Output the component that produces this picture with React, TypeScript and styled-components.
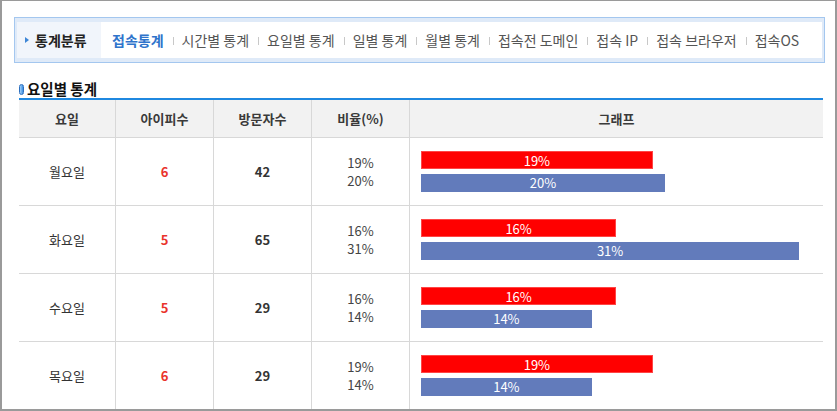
import React from 'react';
import styled, { createGlobalStyle } from 'styled-components';

type DayStat = {
  day: string;
  ips: number;
  visitors: number;
  ipRate: number;
  visitRate: number;
};

const stats: DayStat[] = [
  { day: '월요일', ips: 6, visitors: 42, ipRate: 19, visitRate: 20 },
  { day: '화요일', ips: 5, visitors: 65, ipRate: 16, visitRate: 31 },
  { day: '수요일', ips: 5, visitors: 29, ipRate: 16, visitRate: 14 },
  { day: '목요일', ips: 6, visitors: 29, ipRate: 19, visitRate: 14 },
];

const menu = ['접속통계', '시간별 통계', '요일별 통계', '일별 통계', '월별 통계', '접속전 도메인', '접속 IP', '접속 브라우저', '접속OS'];

const PX_PER_PERCENT = 12.2;

export default function App(): JSX.Element {
  return <>
    <GlobalStyle />
    <Frame>
      <NavBox>
        <NavLabel>
          <Arrow />
          통계분류
        </NavLabel>
        <NavList>
          { menu.map((item, i) => (
            <React.Fragment key={ item }>
              { i > 0 && <Separator /> }
              <NavItem $active={ i === 0 }>{ item }</NavItem>
            </React.Fragment>
          )) }
        </NavList>
      </NavBox>
      <Section>
        <TitleRow>
          <Pill />
          <Title>요일별 통계</Title>
        </TitleRow>
        <StatTable>
          <thead>
            <tr>
              <HeadCell style={{ width: 96 }}>요일</HeadCell>
              <HeadCell style={{ width: 97 }}>아이피수</HeadCell>
              <HeadCell style={{ width: 97 }}>방문자수</HeadCell>
              <HeadCell style={{ width: 97 }}>비율(%)</HeadCell>
              <HeadCell $last>그래프</HeadCell>
            </tr>
          </thead>
          <tbody>
            { stats.map(row => (
              <tr key={ row.day }>
                <Cell>{ row.day }</Cell>
                <Cell><IpCount>{ row.ips }</IpCount></Cell>
                <Cell><Visitors>{ row.visitors }</Visitors></Cell>
                <Cell>
                  <RateLine>{ `${row.ipRate}%` }</RateLine>
                  <RateLine>{ `${row.visitRate}%` }</RateLine>
                </Cell>
                <GraphCell>
                  <Bar $kind="ip" style={{ width: row.ipRate * PX_PER_PERCENT }}>{ `${row.ipRate}%` }</Bar>
                  <Bar $kind="visit" style={{ width: row.visitRate * PX_PER_PERCENT }}>{ `${row.visitRate}%` }</Bar>
                </GraphCell>
              </tr>
            )) }
          </tbody>
        </StatTable>
      </Section>
    </Frame>
  </>;
}

const GlobalStyle = createGlobalStyle`
  html, body {
    margin: 0;
    padding: 0;
    background: #fff;
  }
  body {
    font-family: "Noto Sans CJK KR", "Noto Sans", sans-serif;
    color: #333;
  }
`;

const Frame = styled.div`
  box-sizing: border-box;
  width: 837px;
  height: 411px;
  overflow: hidden;
  border: 2px solid #9a9a9a;
  border-top-width: 1px;
  padding: 16px 10px 0 12px;
  background: #fff;
`;

const NavBox = styled.nav`
  box-sizing: border-box;
  height: 46px;
  display: flex;
  border: 1px solid #a4c7ef;
  padding: 4px 2px;
  background: #dfeaf8;
`;

const NavLabel = styled.div`
  width: 84px;
  display: flex;
  align-items: center;
  padding-left: 8px;
  box-sizing: border-box;
  background: #f1f5fb;
  font-size: 14px;
  font-weight: 700;
  color: #222;
`;

const Arrow = styled.span`
  width: 0;
  height: 0;
  border-top: 3.5px solid transparent;
  border-bottom: 3.5px solid transparent;
  border-left: 4px solid #3d86d6;
  margin-right: 6px;
`;

const NavList = styled.div`
  flex: 1;
  display: flex;
  align-items: center;
  padding-left: 11px;
  background: #fff;
`;

const NavItem = styled.span<{ $active?: boolean }>`
  font-size: 14px;
  line-height: 18px;
  white-space: nowrap;
  color: ${ p => p.$active ? '#2f74cb' : '#555' };
  font-weight: ${ p => p.$active ? 700 : 400 };
`;

const Separator = styled.span`
  width: 1px;
  height: 8px;
  margin: 2px 8px 0 9px;
  background: #c8c8c8;
`;

const Section = styled.section`
  margin: 0 2px 0 5px;
`;

const TitleRow = styled.div`
  display: flex;
  align-items: center;
  height: 18px;
  margin-top: 17px;
`;

const Pill = styled.span`
  box-sizing: border-box;
  width: 5px;
  height: 11px;
  border-radius: 3px;
  border: 1px solid #2c6fbf;
  background: linear-gradient(to right, #9fd0fa, #3c8de0);
  margin-right: 3px;
`;

const Title = styled.h2`
  margin: 0;
  font-size: 14.5px;
  line-height: 18px;
  font-weight: 700;
  color: #111;
`;

const StatTable = styled.table`
  width: 100%;
  border-collapse: collapse;
  border-top: 2px solid #1f88e0;
  table-layout: fixed;
  font-size: 13px;
`;

const HeadCell = styled.th<{ $last?: boolean }>`
  height: 37px;
  padding: 0;
  background: #f2f2f2;
  border-bottom: 1px solid #d8d8d8;
  border-right: ${ p => p.$last ? 'none' : '1px solid #d8d8d8' };
  font-weight: 700;
  color: #3a3a3a;
  text-align: center;
`;

const Cell = styled.td`
  height: 67px;
  padding: 0;
  border-bottom: 1px solid #d8d8d8;
  border-right: 1px solid #d8d8d8;
  text-align: center;
  color: #333;
`;

const IpCount = styled.b`
  color: #e9332c;
`;

const Visitors = styled.b`
  color: #333;
`;

const RateLine = styled.div`
  line-height: 18px;
  color: #444;
`;

const GraphCell = styled.td`
  padding: 0 0 0 11px;
  border-bottom: 1px solid #d8d8d8;
`;

const Bar = styled.div<{ $kind: 'ip' | 'visit' }>`
  box-sizing: border-box;
  height: 18px;
  line-height: 17px;
  font-size: 13px;
  color: #fff;
  text-align: center;
  white-space: nowrap;
  background: ${ p => p.$kind === 'ip' ? '#ff0000' : '#627bbb' };
  border: ${ p => p.$kind === 'ip' ? '1px solid #ff4545' : 'none' };
  & + & {
    margin-top: 5px;
  }
`;
